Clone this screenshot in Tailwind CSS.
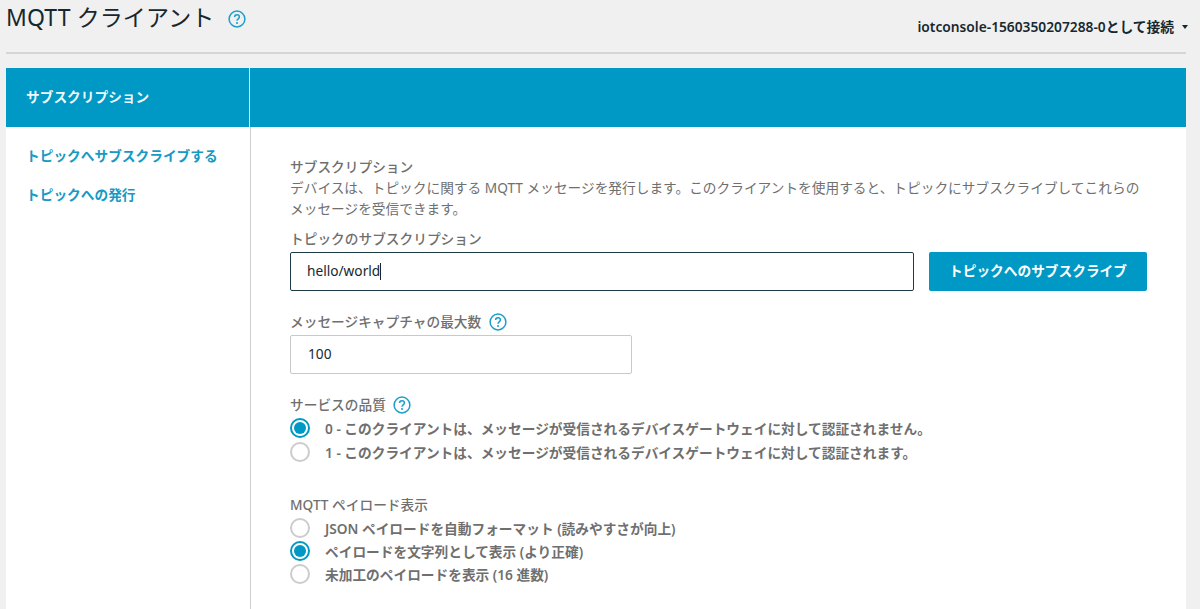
<!DOCTYPE html>
<html lang="ja">
<head>
<meta charset="utf-8">
<script src="https://cdn.jsdelivr.net/npm/@tailwindcss/browser@4"></script>
</head>
<body class="w-[1200px] h-[609px] overflow-hidden bg-[#f0f0f0] font-['Noto_Sans','Noto_Sans_CJK_JP',sans-serif] text-[13.7px] text-[#6f6f6f]">
<div class="ml-[6px] w-[1180px]">
  <header class="h-[54px] border-b-2 border-[#d5d5d5] flex justify-between">
    <div class="flex items-center h-[34px] gap-[14px]">
      <h1 class="text-[23px] leading-[34px] text-[#16282f] tracking-[0.1px]">MQTT クライアント</h1>
      <svg class="w-[18px] h-[18px] mt-[3px]" viewBox="0 0 18 18" fill="none"><circle cx="9" cy="9" r="7.9" stroke="#1b9ec9" stroke-width="1.5"/><path d="M6.6 7.1c0-1.4 1-2.3 2.4-2.3s2.4.9 2.4 2.2c0 1.9-2.4 1.9-2.4 3.7" stroke="#1b9ec9" stroke-width="1.5"/><circle cx="9" cy="13" r="1" fill="#1b9ec9"/></svg>
    </div>
    <div class="flex items-center h-[54px] gap-[8px] translate-x-[2px] font-semibold text-[13.75px] text-[#16282f]">
      <span>iotconsole-1560350207288-0として接続</span>
      <span class="w-0 h-0 border-x-[3.5px] border-x-transparent border-t-[4px] border-t-[#16282f]"></span>
    </div>
  </header>
  <main class="mt-[14px] h-[541px] bg-white">
    <div class="h-[59px] bg-[#0098c4] flex">
      <div class="w-[244px] shrink-0 border-r border-white/90 pl-[20px] flex items-center font-semibold text-white/95">サブスクリプション</div>
    </div>
    <div class="flex h-[482px]">
      <nav class="w-[245px] shrink-0 border-r border-[#cfcfcf] pl-[20px] pt-[19px] font-semibold text-[#169ac4]">
        <div class="leading-[19px]">トピックへサブスクライブする</div>
        <div class="leading-[19px] mt-[20px]">トピックへの発行</div>
      </nav>
      <section class="flex-1 pl-[39px] pr-[39px] pt-[30px]">
        <div class="leading-[20px] font-medium">サブスクリプション</div>
        <p class="leading-[21px]">デバイスは、トピックに関する MQTT メッセージを発行します。このクライアントを使用すると、トピックにサブスクライブしてこれらのメッセージを受信できます。</p>
        <div class="mt-[10px] leading-[20px] font-medium">トピックのサブスクリプション</div>
        <div class="mt-[3px] flex justify-between">
          <div class="w-[624px] h-[39px] border border-[#1d3a46] rounded-[2px] bg-white pl-[16px] flex items-center text-[#16282f]">hello/world<span class="w-px h-[17px] bg-[#16282f]"></span></div>
          <button class="w-[218px] h-[39px] rounded-[2px] bg-[#0098c4] text-white font-semibold">トピックへのサブスクライブ</button>
        </div>
        <div class="mt-[21px] flex items-center gap-[8px] h-[20px] font-medium">メッセージキャプチャの最大数
          <svg class="w-[18px] h-[18px]" viewBox="0 0 18 18" fill="none"><circle cx="9" cy="9" r="7.9" stroke="#1b9ec9" stroke-width="1.5"/><path d="M6.6 7.1c0-1.4 1-2.3 2.4-2.3s2.4.9 2.4 2.2c0 1.9-2.4 1.9-2.4 3.7" stroke="#1b9ec9" stroke-width="1.5"/><circle cx="9" cy="13" r="1" fill="#1b9ec9"/></svg>
        </div>
        <div class="mt-[3px] w-[342px] h-[39px] border border-[#c9c9c9] rounded-[2px] pl-[17px] flex items-center text-[#16282f]">100</div>
        <div class="mt-[21px] flex items-center gap-[7px] h-[20px] font-medium">サービスの品質
          <svg class="w-[18px] h-[18px]" viewBox="0 0 18 18" fill="none"><circle cx="9" cy="9" r="7.9" stroke="#1b9ec9" stroke-width="1.5"/><path d="M6.6 7.1c0-1.4 1-2.3 2.4-2.3s2.4.9 2.4 2.2c0 1.9-2.4 1.9-2.4 3.7" stroke="#1b9ec9" stroke-width="1.5"/><circle cx="9" cy="13" r="1" fill="#1b9ec9"/></svg>
        </div>
        <div class="flex flex-col gap-[4px] mt-[3px]">
          <div class="flex items-center h-[20px] gap-[15px] font-semibold"><span class="w-[20px] h-[20px] rounded-full border-2 border-[#0098c4] flex items-center justify-center"><span class="w-[12px] h-[12px] rounded-full bg-[#0098c4]"></span></span><span class="pt-[2px]">0 - このクライアントは、メッセージが受信されるデバイスゲートウェイに対して認証されません。</span></div>
          <div class="flex items-center h-[20px] gap-[15px] font-semibold"><span class="w-[20px] h-[20px] rounded-full border-2 border-[#cccccc]"></span><span class="pt-[2px]">1 - このクライアントは、メッセージが受信されるデバイスゲートウェイに対して認証されます。</span></div>
        </div>
        <div class="mt-[33px] h-[20px] leading-[20px] font-medium">MQTT ペイロード表示</div>
        <div class="flex flex-col gap-[3px] mt-[3px]">
          <div class="flex items-center h-[20px] gap-[15px] font-semibold"><span class="w-[20px] h-[20px] rounded-full border-2 border-[#cccccc]"></span><span class="pt-[2px]">JSON ペイロードを自動フォーマット (読みやすさが向上)</span></div>
          <div class="flex items-center h-[20px] gap-[15px] font-semibold"><span class="w-[20px] h-[20px] rounded-full border-2 border-[#0098c4] flex items-center justify-center"><span class="w-[12px] h-[12px] rounded-full bg-[#0098c4]"></span></span><span class="pt-[2px]">ペイロードを文字列として表示 (より正確)</span></div>
          <div class="flex items-center h-[20px] gap-[15px] font-semibold"><span class="w-[20px] h-[20px] rounded-full border-2 border-[#cccccc]"></span><span class="pt-[2px]">未加工のペイロードを表示 (16 進数)</span></div>
        </div>
      </section>
    </div>
  </main>
</div>
</body>
</html>
